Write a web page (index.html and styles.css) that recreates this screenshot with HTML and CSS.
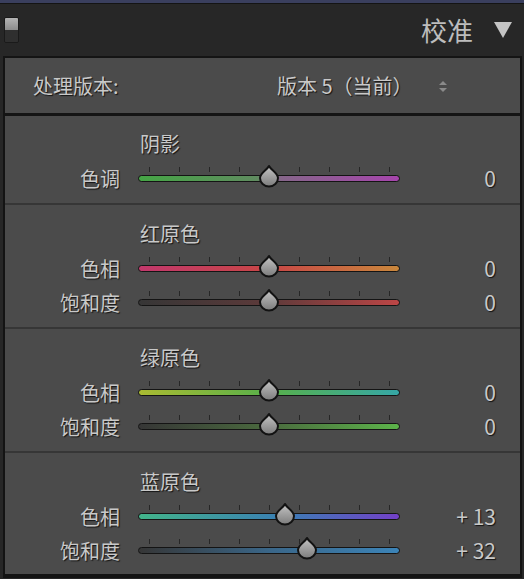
FILE: index.html
```html
<!DOCTYPE html>
<html lang="zh-CN">
<head>
<meta charset="utf-8">
<title>校准</title>
<link rel="stylesheet" href="styles.css">
</head>
<body>
<div class="topbar"></div>
<header class="head">
  <div class="toggle"><span class="on"></span><span class="off"></span></div>
  <h1 class="title">校准</h1>
  <svg class="caret" width="20" height="18" viewBox="0 0 20 18"><polygon points="1,1 19,1 10,17" fill="#c4c4c4"/></svg>
</header>
<main class="panel">
  <div class="process">
    <span class="plabel">处理版本:</span>
    <span class="pvalue">版本 5（当前）<svg class="updown" width="8" height="11" viewBox="0 0 8 11"><polygon points="4,0 8,4 0,4" fill="#8a8a8a"/><polygon points="0,7 8,7 4,11" fill="#8a8a8a"/></svg></span>
  </div>

  <section class="group">
    <div class="gtitle">阴影</div>
    <div class="row">
      <span class="label">色调</span>
      <div class="slider"><div class="track t-tint"></div><svg class="thumb" style="left: calc(50% - 11px)" width="22" height="24" viewBox="0 0 22 24"><path d="M11 2 C13 6 20 9 20 14 A9 8.5 0 0 1 2 14 C2 9 9 6 11 2 Z" fill="url(#thumbfill)" stroke="#121212" stroke-width="2" stroke-linejoin="round"/></svg></div>
      <span class="value">0</span>
    </div>
  </section>

  <section class="group">
    <div class="gtitle">红原色</div>
    <div class="row">
      <span class="label">色相</span>
      <div class="slider"><div class="track t-rh"></div><svg class="thumb" style="left: calc(50% - 11px)" width="22" height="24" viewBox="0 0 22 24"><path d="M11 2 C13 6 20 9 20 14 A9 8.5 0 0 1 2 14 C2 9 9 6 11 2 Z" fill="url(#thumbfill)" stroke="#121212" stroke-width="2" stroke-linejoin="round"/></svg></div>
      <span class="value">0</span>
    </div>
    <div class="row">
      <span class="label">饱和度</span>
      <div class="slider"><div class="track t-rs"></div><svg class="thumb" style="left: calc(50% - 11px)" width="22" height="24" viewBox="0 0 22 24"><path d="M11 2 C13 6 20 9 20 14 A9 8.5 0 0 1 2 14 C2 9 9 6 11 2 Z" fill="url(#thumbfill)" stroke="#121212" stroke-width="2" stroke-linejoin="round"/></svg></div>
      <span class="value">0</span>
    </div>
  </section>

  <section class="group">
    <div class="gtitle">绿原色</div>
    <div class="row">
      <span class="label">色相</span>
      <div class="slider"><div class="track t-gh"></div><svg class="thumb" style="left: calc(50% - 11px)" width="22" height="24" viewBox="0 0 22 24"><path d="M11 2 C13 6 20 9 20 14 A9 8.5 0 0 1 2 14 C2 9 9 6 11 2 Z" fill="url(#thumbfill)" stroke="#121212" stroke-width="2" stroke-linejoin="round"/></svg></div>
      <span class="value">0</span>
    </div>
    <div class="row">
      <span class="label">饱和度</span>
      <div class="slider"><div class="track t-gs"></div><svg class="thumb" style="left: calc(50% - 11px)" width="22" height="24" viewBox="0 0 22 24"><path d="M11 2 C13 6 20 9 20 14 A9 8.5 0 0 1 2 14 C2 9 9 6 11 2 Z" fill="url(#thumbfill)" stroke="#121212" stroke-width="2" stroke-linejoin="round"/></svg></div>
      <span class="value">0</span>
    </div>
  </section>

  <section class="group last">
    <div class="gtitle">蓝原色</div>
    <div class="row">
      <span class="label">色相</span>
      <div class="slider"><div class="track t-bh"></div><svg class="thumb" style="left: calc(56.1% - 11px)" width="22" height="24" viewBox="0 0 22 24"><path d="M11 2 C13 6 20 9 20 14 A9 8.5 0 0 1 2 14 C2 9 9 6 11 2 Z" fill="url(#thumbfill)" stroke="#121212" stroke-width="2" stroke-linejoin="round"/></svg></div>
      <span class="value">+ 13</span>
    </div>
    <div class="row">
      <span class="label">饱和度</span>
      <div class="slider"><div class="track t-bs"></div><svg class="thumb" style="left: calc(64.5% - 11px)" width="22" height="24" viewBox="0 0 22 24"><path d="M11 2 C13 6 20 9 20 14 A9 8.5 0 0 1 2 14 C2 9 9 6 11 2 Z" fill="url(#thumbfill)" stroke="#121212" stroke-width="2" stroke-linejoin="round"/></svg></div>
      <span class="value">+ 32</span>
    </div>
  </section>
</main>
<svg class="defs" width="0" height="0"><defs><linearGradient id="thumbfill" x1="0" y1="0" x2="0" y2="1"><stop offset="0" stop-color="#c4c4c4"/><stop offset="1" stop-color="#7c7c7c"/></linearGradient></defs></svg>
</body>
</html>
```
FILE: styles.css
```css
html, body {
  margin: 0;
  padding: 0;
  background: #272727;
  height: 579px;
  overflow: hidden;
}
body {
  font-family: "Noto Sans CJK SC", "Noto Sans", sans-serif;
  color: #c9c9c9;
}
.topbar {
  height: 3px;
  background: #3a3f5e;
  border-bottom: 1px solid #141414;
}
.head {
  height: 52px;
  display: flex;
  align-items: center;
  padding: 0 11px 0 4px;
  background: #272727;
}
.toggle {
  width: 15px;
  height: 26px;
  display: flex;
  flex-direction: column;
  box-sizing: border-box;
  border: 1px solid #1a1a1a;
  border-radius: 2px;
  overflow: hidden;
}
.toggle .on {
  flex: 1;
  background: linear-gradient(#b4b4b4, #8c8c8c);
}
.toggle .off {
  flex: 1;
  background: #2f2f2f;
}
.title {
  margin: 0 0 0 auto;
  font-size: 26px;
  font-weight: 400;
  line-height: 30px;
  color: #bdbdbd;
}
.caret {
  margin-left: 20px;
  display: block;
}
.panel {
  display: block;
  margin: 0 2px 0 3px;
  border: 2px solid #141414;
  border-bottom-width: 4px;
  background: #4b4b4b;
  text-shadow: 1px 1px 1px rgba(0, 0, 0, 0.75);
}
.process {
  height: 55px;
  display: grid;
  grid-template-columns: 244px 1fr;
  align-items: center;
  padding-left: 28px;
  border-bottom: 3px solid #141414;
  font-size: 20px;
}
.pvalue {
  display: flex;
  align-items: center;
}
.updown {
  display: block;
  margin-left: 26px;
  margin-top: 2px;
}
.group {
  padding: 14px 0 8px;
  border-bottom: 2px solid #363636;
}
.group.last {
  border-bottom: 0;
  padding-bottom: 7px;
}
.group:first-of-type {
  padding-top: 13px;
}
.gtitle {
  margin-left: 135px;
  font-size: 20px;
  line-height: 30px;
  height: 30px;
  margin-bottom: 2px;
}
.row {
  display: flex;
  align-items: center;
  height: 34px;
  font-size: 20px;
}
.label {
  width: 115px;
  text-align: right;
  flex: none;
}
.slider {
  position: relative;
  flex: none;
  width: 262px;
  height: 34px;
  margin-left: 18px;
  display: flex;
  align-items: center;
}
.slider::before {
  content: "";
  position: absolute;
  left: 11px;
  top: 6px;
  width: 241px;
  height: 5px;
  background: repeating-linear-gradient(to right, #262626 0 1px, transparent 1px 30px);
}
.track {
  width: 100%;
  height: 7px;
  box-sizing: border-box;
  border: 1.5px solid #141414;
  border-radius: 4px;
}
.thumb {
  position: absolute;
  top: 3px;
  display: block;
}
.value {
  flex: 1;
  text-align: right;
  padding-right: 24px;
  font-size: 21px;
}
.t-tint { background: linear-gradient(to right, #45a545, #5f8c5f 45%, #86658a 55%, #a645ac); }
.t-rh { background: linear-gradient(to right, #c2386c, #c84646 50%, #c9873c); }
.t-rs { background: linear-gradient(to right, #363636, #5d3a3a 50%, #bd4646); }
.t-gh { background: linear-gradient(to right, #aabb32, #58b04a 50%, #36a7a6); }
.t-gs { background: linear-gradient(to right, #363636, #4a6a3e 50%, #5cb44a); }
.t-bh { background: linear-gradient(to right, #42b48a, #3a7fb4 55%, #7340c8); }
.t-bs { background: linear-gradient(to right, #363636, #3a6688 50%, #3c84b8); }
.defs {
  display: block;
}
```
